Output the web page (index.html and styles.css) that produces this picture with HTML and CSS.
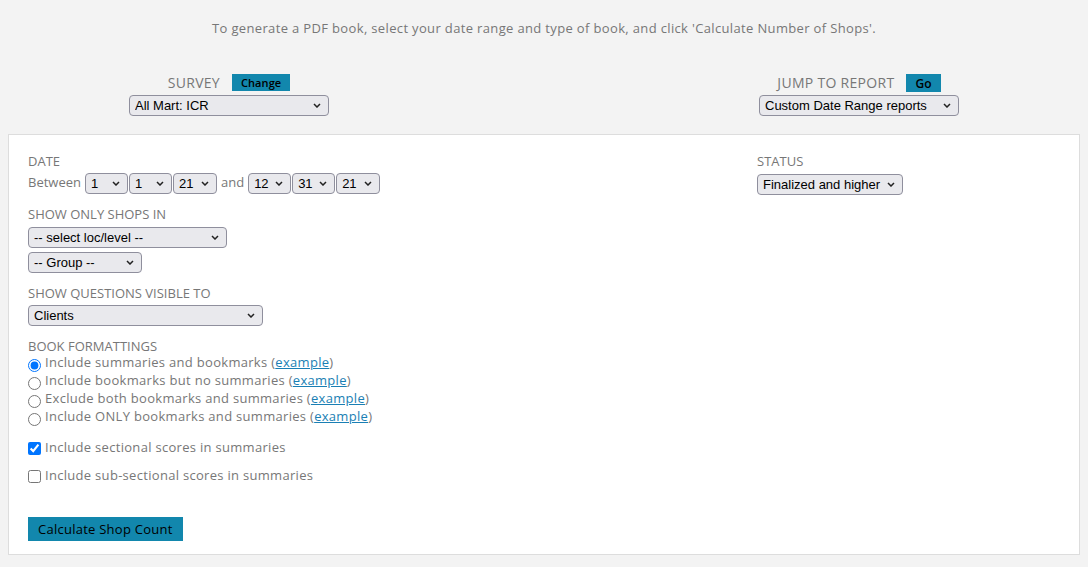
FILE: index.html
```html
<!DOCTYPE html>
<html lang="en">

<head>
  <meta charset="UTF-8">
  <title>PDF Book</title>
  <link rel="stylesheet" href="styles.css">
</head>

<body>
  <p class="intro">To generate a PDF book, select your date range and type of book, and click 'Calculate Number of Shops'.</p>

  <div class="top-bar">
    <div class="top-box survey">
      <div class="top-label">SURVEY <button class="btn small">Change</button></div>
      <select class="sel-survey">
        <option>All Mart: ICR</option>
      </select>
    </div>
    <div class="top-box jump">
      <div class="top-label">JUMP TO REPORT <button class="btn small go">Go</button></div>
      <select class="sel-report">
        <option>Custom Date Range reports</option>
      </select>
    </div>
  </div>

  <div class="panel">
    <div class="left-col">
      <div class="field">
        <div class="label">DATE</div>
        <div class="date-row">
          <span class="txt">Between</span>
          <select class="d-m"><option>1</option></select>
          <select class="d-m"><option>1</option></select>
          <select class="d-y"><option>21</option></select>
          <span class="txt and">and</span>
          <select class="d-m"><option>12</option></select>
          <select class="d-m"><option>31</option></select>
          <select class="d-y"><option>21</option></select>
        </div>
      </div>

      <div class="field">
        <div class="label">SHOW ONLY SHOPS IN</div>
        <select class="sel-loc"><option>-- select loc/level --</option></select>
        <select class="sel-group"><option>-- Group --</option></select>
      </div>

      <div class="field">
        <div class="label">SHOW QUESTIONS VISIBLE TO</div>
        <select class="sel-vis"><option>Clients</option></select>
      </div>

      <div class="field formats">
        <div class="label">BOOK FORMATTINGS</div>
        <div class="opts">
          <label class="opt"><input type="radio" name="fmt" checked>Include summaries and bookmarks (<a href="#">example</a>)</label>
          <label class="opt"><input type="radio" name="fmt">Include bookmarks but no summaries (<a href="#">example</a>)</label>
          <label class="opt"><input type="radio" name="fmt">Exclude both bookmarks and summaries (<a href="#">example</a>)</label>
          <label class="opt"><input type="radio" name="fmt">Include ONLY bookmarks and summaries (<a href="#">example</a>)</label>
        </div>
      </div>

      <label class="chk"><input type="checkbox" checked>Include sectional scores in summaries</label>
      <label class="chk"><input type="checkbox">Include sub-sectional scores in summaries</label>

      <button class="btn calc">Calculate Shop Count</button>
    </div>

    <div class="right-col">
      <div class="label">STATUS</div>
      <select class="sel-status"><option>Finalized and higher</option></select>
    </div>
  </div>
</body>

</html>
```

FILE: styles.css
```css
body {
  margin: 8px;
  background: #f3f3f3;
  font-family: "Open Sans", sans-serif;
  font-size: 13px;
  color: #777;
}

select {
  appearance: none;
  font-family: "Liberation Sans", Arial, sans-serif;
  font-size: 13px;
  color: #000;
  display: block;
  height: 21px;
  background-color: #e9e9ed;
  background-image: url("data:image/svg+xml,%3Csvg xmlns='http://www.w3.org/2000/svg' width='8' height='5' viewBox='0 0 8 5'%3E%3Cpath d='M1 1l3 3 3-3' fill='none' stroke='%23222' stroke-width='1.5'/%3E%3C/svg%3E");
  background-repeat: no-repeat;
  background-position: right 7px center;
  border: 1px solid #8f8f9d;
  border-radius: 4px;
  padding: 0 20px 0 5px;
}

.intro {
  text-align: center;
  margin: 11px 0 0;
  line-height: 18px;
  letter-spacing: 0.35px;
}

.top-bar {
  display: flex;
  margin-top: 36px;
  padding-left: 121px;
}

.top-box {
  width: 200px;
}

.jump {
  margin-left: 430px;
}

.top-label {
  text-align: center;
  font-size: 14px;
  line-height: 18px;
  height: 22px;
  padding-top: 1px;
  box-sizing: border-box;
  letter-spacing: 0.3px;
}

.btn {
  background: #1287ad;
  border: none;
  color: #000;
  font-family: "Open Sans", sans-serif;
  cursor: pointer;
}

.btn.small {
  font-size: 11px;
  font-weight: 600;
  height: 17px;
  padding: 0 9px;
  margin-left: 8px;
  vertical-align: top;
  letter-spacing: 0.1px;
}

.btn.go {
  font-size: 12px;
  height: 18px;
}

.sel-survey,
.sel-report {
  width: 200px;
}

.panel {
  margin-top: 18px;
  background: #fff;
  border: 1px solid #ddd;
  padding: 17px 19px 13px;
  display: grid;
  grid-template-columns: 729px 1fr;
}

.label {
  line-height: 18px;
}

.field {
  margin-bottom: 11px;
}

.formats {
  margin-bottom: 0;
}

.opts {
  margin-top: -2px;
}

.date-row {
  display: flex;
  align-items: center;
  gap: 1px;
  margin-top: 3px;
}

.txt {
  margin-right: 3px;
  margin-top: -3px;
}

.and {
  margin: -3px 3px 0 3px;
}

.d-m {
  width: 43px;
}

.d-y {
  width: 44px;
}

.sel-loc {
  width: 199px;
  margin-top: 4px;
}

.sel-group {
  width: 114px;
  margin-top: 4px;
}

.sel-vis {
  width: 235px;
  margin-top: 3px;
}

.sel-status {
  width: 146px;
  margin-top: 4px;
}

.opt,
.chk {
  display: flex;
  align-items: flex-start;
  line-height: 18px;
  letter-spacing: 0.3px;
}

.opt input,
.chk input {
  margin: 6px 4px -1px 0;
}

.chk input {
  margin-top: 4px;
  margin-bottom: 0;
}

.chk {
  margin-top: 13px;
}

.chk + .chk {
  margin-top: 10px;
}

a {
  color: #1a7fb4;
}

.btn.calc {
  display: block;
  margin-top: 33px;
  height: 24px;
  padding: 0 10px;
  font-size: 13px;
  letter-spacing: 0.25px;
}
```
